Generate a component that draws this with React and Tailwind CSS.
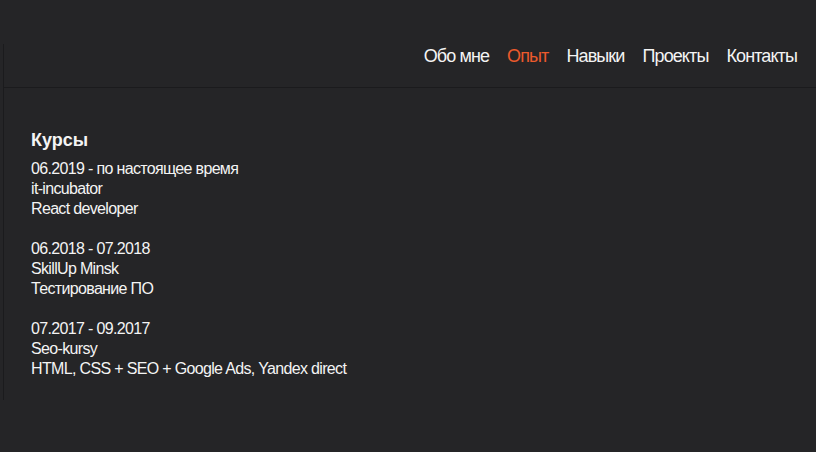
const NAV = [
  { label: 'Обо мне' },
  { label: 'Опыт', active: true },
  { label: 'Навыки' },
  { label: 'Проекты' },
  { label: 'Контакты' },
];

const COURSES = [
  { period: '06.2019 - по настоящее время', school: 'it-incubator', title: 'React developer' },
  { period: '06.2018 - 07.2018', school: 'SkillUp Minsk', title: 'Тестирование ПО' },
  { period: '07.2017 - 09.2017', school: 'Seo-kursy', title: 'HTML, CSS + SEO + Google Ads, Yandex direct' },
];

export default function App() {
  return (
    <div className="w-full h-[452px] bg-[#252527] pt-[44px] pl-[3px] font-['Liberation_Sans',Arial,sans-serif] text-[#f4f4f4] overflow-hidden">
      <div className="h-[356px] border-l border-[#1b1b1d]">
        <header className="h-[44px] flex justify-end items-start pt-[2px] pr-[19px] gap-[18px] border-b border-[#1b1b1d]">
          {NAV.map(item => (
            <a key={item.label} href="#"
              className={`text-[18px] leading-[21px] tracking-[-0.9px] ${item.active ? 'text-[#ec5a2c]' : 'text-[#f4f4f4]'}`}>
              {item.label}
            </a>
          ))}
        </header>

        <section className="pl-[27px] pt-[41px]">
          <h2 className="text-[18px] leading-[22px] font-bold mb-[8px]">Курсы</h2>
          <div className="flex flex-col gap-[20px] text-[16px] leading-[20px] tracking-[-0.66px]">
            {COURSES.map(c => (
              <div key={c.period}>
                <p>{c.period}</p>
                <p>{c.school}</p>
                <p>{c.title}</p>
              </div>
            ))}
          </div>
        </section>
      </div>
    </div>
  );
}
